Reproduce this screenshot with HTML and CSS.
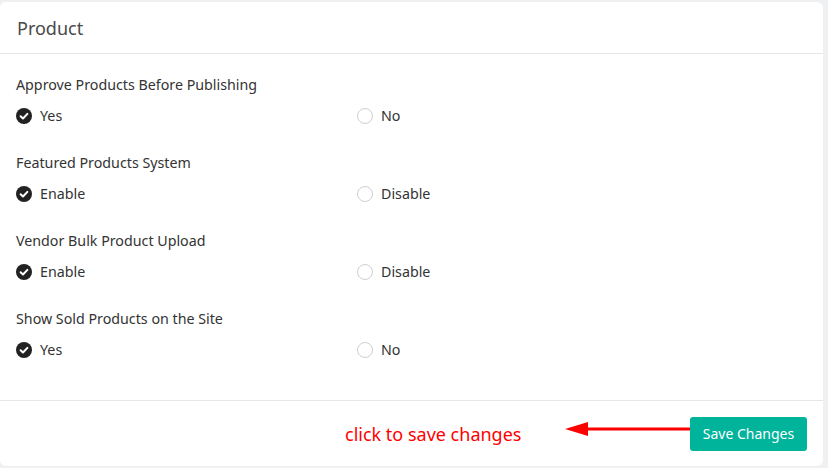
FILE: index.html
```html
<!DOCTYPE html>
<html>
<head>
<meta charset="utf-8">
<link rel="stylesheet" href="styles.css">
</head>
<body>
<div class="card">
  <div class="card-header">Product</div>
  <div class="card-body">
    <div class="group">
      <div class="label">Approve Products Before Publishing</div>
      <div class="options">
        <div class="opt"><span class="check"><svg viewBox="0 0 16 16" width="16" height="16"><circle cx="8" cy="8" r="8" fill="#222"/><path d="M4.6 8.2 L7 10.5 L11.4 5.9" fill="none" stroke="#fff" stroke-width="2" stroke-linecap="round" stroke-linejoin="round"/></svg></span>Yes</div>
        <div class="opt"><span class="radio"></span>No</div>
      </div>
    </div>
    <div class="group">
      <div class="label">Featured Products System</div>
      <div class="options">
        <div class="opt"><span class="check"><svg viewBox="0 0 16 16" width="16" height="16"><circle cx="8" cy="8" r="8" fill="#222"/><path d="M4.6 8.2 L7 10.5 L11.4 5.9" fill="none" stroke="#fff" stroke-width="2" stroke-linecap="round" stroke-linejoin="round"/></svg></span>Enable</div>
        <div class="opt"><span class="radio"></span>Disable</div>
      </div>
    </div>
    <div class="group">
      <div class="label">Vendor Bulk Product Upload</div>
      <div class="options">
        <div class="opt"><span class="check"><svg viewBox="0 0 16 16" width="16" height="16"><circle cx="8" cy="8" r="8" fill="#222"/><path d="M4.6 8.2 L7 10.5 L11.4 5.9" fill="none" stroke="#fff" stroke-width="2" stroke-linecap="round" stroke-linejoin="round"/></svg></span>Enable</div>
        <div class="opt"><span class="radio"></span>Disable</div>
      </div>
    </div>
    <div class="group">
      <div class="label">Show Sold Products on the Site</div>
      <div class="options">
        <div class="opt"><span class="check"><svg viewBox="0 0 16 16" width="16" height="16"><circle cx="8" cy="8" r="8" fill="#222"/><path d="M4.6 8.2 L7 10.5 L11.4 5.9" fill="none" stroke="#fff" stroke-width="2" stroke-linecap="round" stroke-linejoin="round"/></svg></span>Yes</div>
        <div class="opt"><span class="radio"></span>No</div>
      </div>
    </div>
  </div>
  <div class="card-footer">
    <span class="hint">click to save changes</span>
    <svg class="arrow" width="125" height="20" viewBox="0 0 125 20"><line x1="20" y1="8" x2="125" y2="8" stroke="#f00" stroke-width="3"/><polygon points="0,8 23,1 23,15" fill="#f00"/></svg>
    <button class="btn">Save Changes</button>
  </div>
</div>
</body>
</html>
```
FILE: styles.css
```css
html, body {
  margin: 0;
  padding: 0;
  background: #eef0f2;
}
body {
  padding: 2px 5px 2px 0;
  font-family: "Noto Sans", "Open Sans", sans-serif;
  color: #333;
}
.card {
  background: #fff;
  border-radius: 6px;
  height: 464px;
  display: flex;
  flex-direction: column;
}
.card-header {
  height: 52px;
  box-sizing: border-box;
  border-bottom: 1px solid #e6e6e6;
  padding: 14px 17px 0;
  font-size: 18px;
  line-height: 24px;
  color: #4a4a4a;
}
.card-body {
  padding: 21px 16px 0;
  flex: 1;
}
.group {
  margin-bottom: 27px;
}
.label {
  font-size: 14.25px;
  line-height: 20px;
  color: #333;
}
.options {
  display: grid;
  grid-template-columns: 341px 1fr;
  margin-top: 11px;
}
.opt {
  display: flex;
  align-items: center;
  font-size: 14.25px;
  line-height: 20px;
  color: #333;
}
.check {
  display: inline-flex;
  width: 16px;
  height: 16px;
  margin-right: 8px;
}
.radio {
  display: inline-block;
  width: 14px;
  height: 14px;
  border: 1px solid #cfcfcf;
  border-radius: 50%;
  margin-right: 8px;
}
.card-footer {
  height: 66px;
  box-sizing: border-box;
  border-top: 1px solid #e6e6e6;
  display: flex;
  align-items: center;
  padding: 0 16px 0 345px;
}
.hint {
  color: #f00;
  font-size: 18px;
  line-height: 24px;
}
.arrow {
  margin-left: auto;
  margin-top: -6px;
}
.btn {
  background: #00b39b;
  color: #fff;
  border: none;
  border-radius: 3px;
  height: 34px;
  width: 117px;
  font-family: "Noto Sans", "Open Sans", sans-serif;
  font-size: 14px;
  padding: 0;
}
```
